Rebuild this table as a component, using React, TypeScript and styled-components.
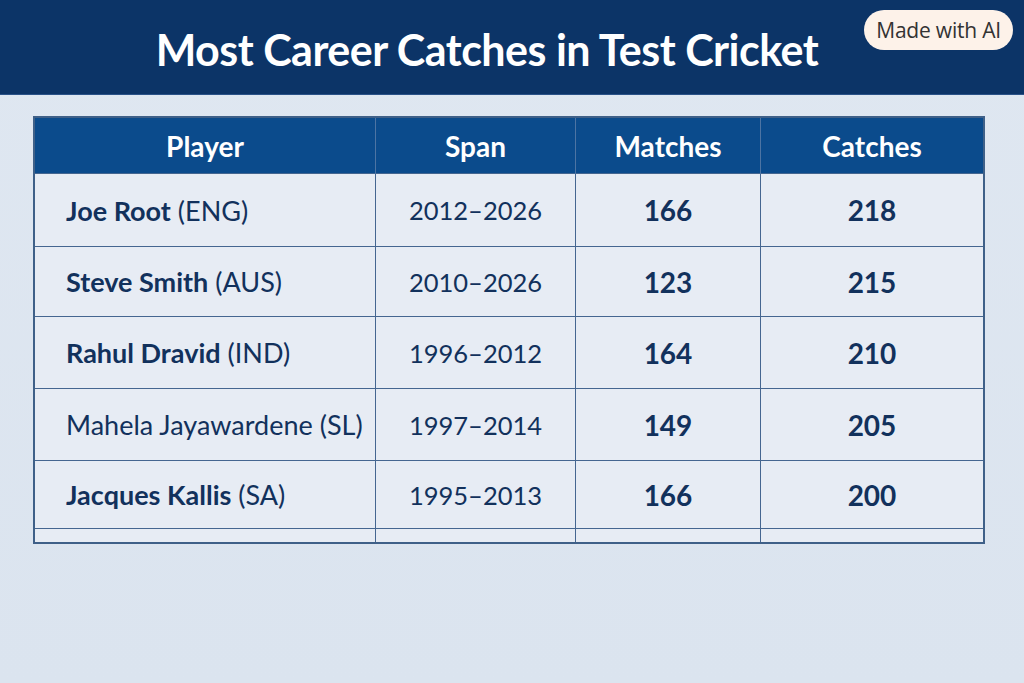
import styled, { createGlobalStyle } from "styled-components";

const GlobalStyle = createGlobalStyle`
  html, body {
    margin: 0;
    padding: 0;
  }
  body {
    width: 1024px;
    height: 683px;
    overflow: hidden;
    background: #dde5ef;
    font-family: Lato, "Open Sans", sans-serif;
  }
`;

const Page = styled.div`
  width: 1024px;
  height: 683px;
  background: linear-gradient(180deg, #dfe7f1 0%, #dbe4ef 100%);
  display: flex;
  flex-direction: column;
`;

const TitleBar = styled.header`
  position: relative;
  height: 95px;
  background: #0c3467;
  display: flex;
  align-items: center;
  justify-content: center;
  border-bottom: 1px solid #2a5288;
  box-sizing: border-box;
`;

const Title = styled.h1`
  margin: 0 50px 0 0;
  padding-top: 4px;
  color: #ffffff;
  font-size: 43px;
  font-weight: 700;
  letter-spacing: -0.5px;
`;

const Badge = styled.div`
  position: absolute;
  top: 10px;
  right: 11px;
  height: 40px;
  padding: 0 12px;
  display: flex;
  align-items: center;
  border-radius: 20px;
  background: #fdf2e9;
  color: #333333;
  font-family: "Open Sans", sans-serif;
  font-size: 21px;
  letter-spacing: -0.2px;
`;

const TableWrap = styled.div`
  padding: 21px 0 0 33px;
`;

const Table = styled.table`
  border-collapse: collapse;
  table-layout: fixed;
  width: 945px;
  border: 2px solid #3f6088;
  background: #e7ecf4;
`;

const HeadCell = styled.th<{ $w: number }>`
  width: ${(p) => p.$w}px;
  height: 55px;
  padding: 0;
  background: #0b4b8c;
  color: #ffffff;
  font-size: 28px;
  font-weight: 700;
  text-align: center;
  border-left: 1px solid #4d74a3;
  &:first-child {
    border-left: none;
  }
`;

const Row = styled.tr<{ $h: number }>`
  height: ${(p) => p.$h}px;
`;

const Cell = styled.td<{ $kind: "name" | "span" | "num" }>`
  padding: ${(p) => (p.$kind === "name" ? "0 0 0 31px" : "0")};
  border: 1.5px solid #456690;
  color: #12315c;
  font-size: ${(p) => (p.$kind === "num" ? "28px" : p.$kind === "name" ? "27px" : "25.5px")};
  font-weight: ${(p) => (p.$kind === "num" ? 700 : 400)};
  text-align: ${(p) => (p.$kind === "name" ? "left" : "center")};
  white-space: nowrap;
`;

const Name = styled.span`
  font-weight: 700;
`;

const Country = styled.span`
  font-weight: 400;
`;

const Plain = styled.span`
  font-size: 27px;
`;

const columns = [
  { label: "Player", w: 340 },
  { label: "Span", w: 199 },
  { label: "Matches", w: 184 },
  { label: "Catches", w: 222 },
];

const rows = [
  { name: "Joe Root", country: "ENG", span: "2012–2026", matches: 166, catches: 218, h: 73 },
  { name: "Steve Smith", country: "AUS", span: "2010–2026", matches: 123, catches: 215, h: 70 },
  { name: "Rahul Dravid", country: "IND", span: "1996–2012", matches: 164, catches: 210, h: 72 },
  { name: "Mahela Jayawardene", country: "SL", span: "1997–2014", matches: 149, catches: 205, h: 72, plain: true },
  { name: "Jacques Kallis", country: "SA", span: "1995–2013", matches: 166, catches: 200, h: 68 },
];

export default function App() {
  return (
    <Page>
      <GlobalStyle />
      <TitleBar>
        <Title>Most Career Catches in Test Cricket</Title>
        <Badge>Made with AI</Badge>
      </TitleBar>
      <TableWrap>
        <Table>
          <thead>
            <tr>
              {columns.map((c) => (
                <HeadCell key={c.label} $w={c.w}>
                  {c.label}
                </HeadCell>
              ))}
            </tr>
          </thead>
          <tbody>
            {rows.map((r) => (
              <Row key={r.name} $h={r.h}>
                <Cell $kind="name">
                  {r.plain ? (
                    <Plain>
                      {r.name} ({r.country})
                    </Plain>
                  ) : (
                    <>
                      <Name>{r.name}</Name> <Country>({r.country})</Country>
                    </>
                  )}
                </Cell>
                <Cell $kind="span">{r.span}</Cell>
                <Cell $kind="num">{r.matches}</Cell>
                <Cell $kind="num">{r.catches}</Cell>
              </Row>
            ))}
            <Row $h={14}>
              <Cell $kind="name" />
              <Cell $kind="span" />
              <Cell $kind="num" />
              <Cell $kind="num" />
            </Row>
          </tbody>
        </Table>
      </TableWrap>
    </Page>
  );
}
